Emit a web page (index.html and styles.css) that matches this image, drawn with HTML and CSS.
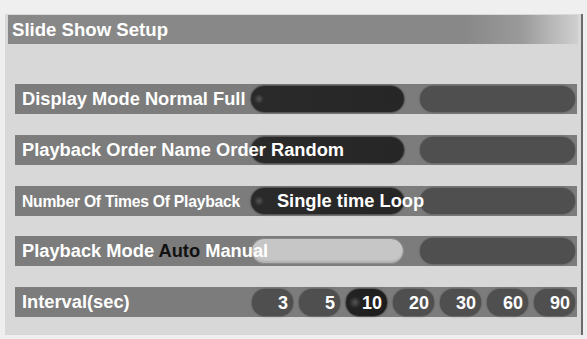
FILE: index.html
```html
<!DOCTYPE html>
<html>
<head>
<meta charset="utf-8">
<link rel="stylesheet" href="styles.css">
</head>
<body>
<div class="panel">
  <div class="title">Slide Show Setup</div>
  <div class="rows">
    <div class="row">
      <div class="pills">
        <div class="pill wide sel"></div>
        <div class="pill wide2"></div>
      </div>
      <div class="label">Display Mode Normal Full</div>
    </div>
    <div class="row">
      <div class="pills">
        <div class="pill wide sel"></div>
        <div class="pill wide2"></div>
      </div>
      <div class="label">Playback Order Name Order Random</div>
    </div>
    <div class="row">
      <div class="pills">
        <div class="pill wide sel"></div>
        <div class="pill wide2"></div>
      </div>
      <div class="label"><span class="small">Number Of Times Of Playback</span><span class="opt">Single time Loop</span></div>
    </div>
    <div class="row">
      <div class="pills">
        <div class="pill wide light"></div>
        <div class="pill wide2"></div>
      </div>
      <div class="label">Playback Mode <span class="black">Auto</span> Manual</div>
    </div>
    <div class="row">
      <div class="pills small-gap">
        <div class="pill num">3</div>
        <div class="pill num">5</div>
        <div class="pill num sel">10</div>
        <div class="pill num">20</div>
        <div class="pill num">30</div>
        <div class="pill num">60</div>
        <div class="pill num">90</div>
      </div>
      <div class="label">Interval(sec)</div>
    </div>
  </div>
</div>
</body>
</html>
```
FILE: styles.css
```css
html, body {
  margin: 0;
  padding: 0;
}
body {
  width: 587px;
  height: 339px;
  background: #efefef;
  overflow: hidden;
  font-family: "Liberation Sans", Arial, sans-serif;
}
.panel {
  margin-top: 14px;
  margin-left: 5px;
  width: 578px;
  height: 321px;
  background: #d8d8d8;
  border-right: 2px solid #6a6a6a;
  padding-top: 1px;
  box-sizing: border-box;
}
.title {
  margin-left: 3px;
  width: 570px;
  height: 29px;
  box-sizing: border-box;
  padding-left: 4px;
  line-height: 30px;
  font-size: 18.6px;
  font-weight: bold;
  color: #fff;
  background: linear-gradient(to right, #888 0%, #888 80%, #9a9a9a 90%, #d0d0d0 100%);
}
.rows {
  margin-top: 40px;
  margin-left: 10px;
  width: 562px;
  display: flex;
  flex-direction: column;
  gap: 20.75px;
}
.row {
  height: 30px;
  background: #7c7c7c;
  display: grid;
  grid-template-areas: "stack";
  align-items: center;
}
.row > * {
  grid-area: stack;
}
.label {
  justify-self: start;
  padding-left: 7px;
  font-size: 18.3px;
  font-weight: bold;
  color: #fff;
  white-space: nowrap;
  position: relative;
  line-height: 30px;
}
.label .small {
  font-size: 15.7px;
  letter-spacing: -0.25px;
}
.label .opt {
  margin-left: 37px;
}
.black {
  color: #111;
}
.pills {
  justify-self: end;
  margin-right: 2px;
  display: flex;
  gap: 16px;
  align-items: center;
}
.pills.small-gap {
  gap: 6px;
}
.pill {
  height: 26px;
  border-radius: 13px;
  background: #4f4f4f;
  box-shadow: 0 0 1.5px 0.5px #5a5a5a;
}
.pill.wide { width: 153px; }
.pill.wide2 { width: 155px; }
.pill.sel {
  background: radial-gradient(circle at 8px 50%, #555 0, #2a2a2a 5px, #262626 100%);
  box-shadow: 0 0 1.5px 0.5px #333;
}
.pill.light {
  background: #c6c6c6;
  border: 1px solid #8a8a8a;
  box-sizing: border-box;
  box-shadow: inset 0 -2px 2px #b0b0b0;
}
.pill.num {
  width: 41px;
  height: 27px;
  box-sizing: border-box;
  padding-right: 5px;
  text-align: right;
  line-height: 28px;
  font-size: 18px;
  font-weight: bold;
  color: #fff;
}
.pill.num.sel {
  background: radial-gradient(circle at 9px 50%, #555 0, #222 6px, #1c1c1c 100%);
}
```
